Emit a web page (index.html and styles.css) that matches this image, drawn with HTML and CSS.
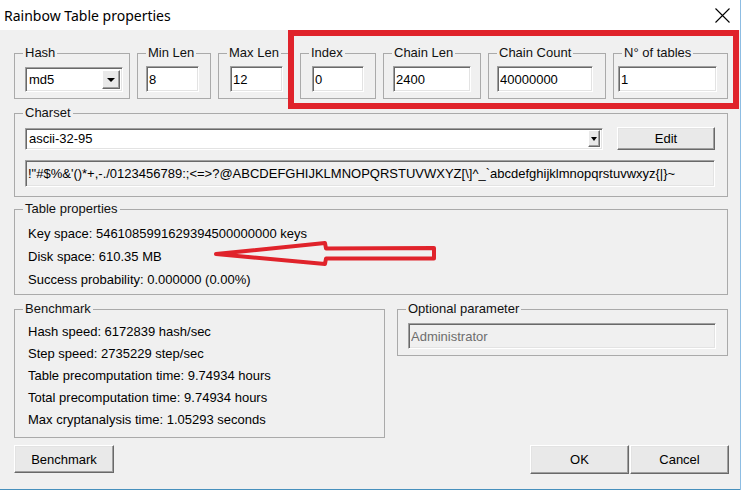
FILE: index.html
```html
<!DOCTYPE html>
<html lang="en">
<head>
    <meta charset="UTF-8">
    <title>Rainbow Table properties</title>
    <link rel="stylesheet" href="styles.css">
</head>
<body>

<div class="window">
    <div class="titlebar">
        <span class="title">Rainbow Table properties</span>
        <span class="close">
            <svg width="15" height="15" viewBox="0 0 15 15"><path d="M0.5 0.5 L14.5 14.5 M14.5 0.5 L0.5 14.5" stroke="#000" stroke-width="1.1" fill="none"/></svg>
        </span>
    </div>

    <div class="client">
        <!-- table parameters -->
        <div class="params">
            <fieldset class="grp g-hash">
                <legend>Hash</legend>
                <div class="body">
                    <div class="combo combo-hash">
                        <span class="combo-value">md5</span>
                        <span class="drop"><span class="tri"></span></span>
                    </div>
                </div>
            </fieldset>
            <fieldset class="grp g-min">
                <legend>Min Len</legend>
                <div class="body"><input type="text" class="field" value="8"></div>
            </fieldset>
            <fieldset class="grp g-max">
                <legend>Max Len</legend>
                <div class="body"><input type="text" class="field" value="12"></div>
            </fieldset>
            <fieldset class="grp g-index">
                <legend>Index</legend>
                <div class="body"><input type="text" class="field" value="0"></div>
            </fieldset>
            <fieldset class="grp g-clen">
                <legend>Chain Len</legend>
                <div class="body"><input type="text" class="field" value="2400"></div>
            </fieldset>
            <fieldset class="grp g-ccount">
                <legend>Chain Count</legend>
                <div class="body"><input type="text" class="field" value="40000000"></div>
            </fieldset>
            <fieldset class="grp g-ntables">
                <legend>N° of tables</legend>
                <div class="body"><input type="text" class="field" value="1"></div>
            </fieldset>
        </div>

        <!-- charset -->
        <fieldset class="grp g-charset">
            <legend>Charset</legend>
            <div class="body">
                <div class="charset-row">
                    <div class="combo combo-charset">
                        <span class="combo-value">ascii-32-95</span>
                        <span class="drop"><span class="tri"></span></span>
                    </div>
                    <button type="button" class="btn btn-edit">Edit</button>
                </div>
                <div class="charset-chars">!"#$%&amp;'()*+,-./0123456789:;&lt;=&gt;?@ABCDEFGHIJKLMNOPQRSTUVWXYZ[\]^_`abcdefghijklmnopqrstuvwxyz{|}~</div>
            </div>
        </fieldset>

        <!-- table properties -->
        <fieldset class="grp g-table">
            <legend>Table properties</legend>
            <div class="body lines">
                <div>Key space: 5461085991629394500000000 keys</div>
                <div>Disk space: 610.35 MB</div>
                <div>Success probability: 0.000000 (0.00%)</div>
            </div>
        </fieldset>

        <div class="bottom">
            <fieldset class="grp g-bench">
                <legend>Benchmark</legend>
                <div class="body lines bench-lines">
                    <div>Hash speed: 6172839 hash/sec</div>
                    <div>Step speed: 2735229 step/sec</div>
                    <div>Table precomputation time: 9.74934 hours</div>
                    <div>Total precomputation time: 9.74934 hours</div>
                    <div>Max cryptanalysis time: 1.05293 seconds</div>
                </div>
            </fieldset>
            <fieldset class="grp g-optional">
                <legend>Optional parameter</legend>
                <div class="body"><input type="text" class="field field-disabled" value="Administrator" disabled></div>
            </fieldset>

            <div class="buttons">
                <button type="button" class="btn btn-bench">Benchmark</button>
                <div class="dlg-buttons">
                    <button type="button" class="btn btn-dlg">OK</button>
                    <button type="button" class="btn btn-dlg">Cancel</button>
                </div>
            </div>
        </div>
    </div>

    <!-- red annotations -->
    <div class="mark-box"></div>
    <svg class="mark-arrow" width="745" height="491" viewBox="0 0 745 491">
        <path d="M216 254 L325 243 L326 248.5 L434 248 L434 258.5 L326 258.5 L325 264 Z" fill="none" stroke="#e0232b" stroke-width="4" stroke-linejoin="round"/>
    </svg>
</div>

</body>
</html>
```

FILE: styles.css
```css
body {
    margin: 0;
    background: #fff;
    font-family: "Liberation Sans", Arial, sans-serif;
    font-size: 13px;
    color: #000;
}
.window {
    position: relative;
    width: 740px;
    border-right: 1px solid #8dbde3;
}
.titlebar {
    height: 30px;
    background: #fff;
    display: flex;
    align-items: center;
    justify-content: space-between;
    padding: 0 10px 0 4px;
}
.title {
    font-family: "Noto Sans", sans-serif;
    font-size: 14px;
    margin-top: 1px;
}
.close {
    display: flex;
    margin-top: 1px;
}
.client {
    box-sizing: border-box;
    height: 460px;
    background: #f0f0f0;
    border-bottom: 1px solid #4790bd;
    padding: 15px 0 0 14px;
}

/* group boxes */
.grp {
    margin: 0;
    padding: 0;
    min-width: 0;
    box-sizing: border-box;
    border: 1px solid #aaaaaa;
}
.grp legend {
    margin-left: 8px;
    padding: 0 2px;
    line-height: 16px;
    font-size: 13px;
    font-weight: normal;
    color: #111;
}
.field {
    display: block;
    box-sizing: border-box;
    height: 26px;
    margin: 0;
    padding: 0 2px;
    font-family: "Liberation Sans", Arial, sans-serif;
    font-size: 13px;
    color: #000;
    background: #fff;
    border: 1px solid;
    border-color: #a0a0a0 #fff #fff #a0a0a0;
    box-shadow: inset 1px 1px #696969, inset -1px -1px #e3e3e3;
    outline: none;
}
.field-disabled {
    background: #f0f0f0;
    color: #6d6d6d;
    width: 308px;
}

.params {
    display: flex;
    gap: 7px;
}
.params .body {
    padding: 5px 0 6px;
}
.g-hash { width: 116px; }
.g-hash .body { padding-left: 10px; }
.g-min { width: 74px; }
.g-min .body { padding-left: 8px; }
.g-min .field { width: 53px; }
.g-max { width: 75px; }
.g-max .body { padding-left: 11px; }
.g-max .field { width: 53px; }
.g-index { width: 76px; }
.g-index .body { padding-left: 11px; }
.g-index .field { width: 52px; }
.g-clen { width: 98px; }
.g-clen .body { padding-left: 9px; }
.g-clen .field { width: 78px; }
.g-ccount { width: 118px; }
.g-ccount .body { padding-left: 8px; }
.g-ccount .field { width: 96px; }
.g-ntables { width: 115px; }
.g-ntables .body { padding-left: 4px; }
.g-ntables .field { width: 99px; }

/* combo boxes */
.combo {
    box-sizing: border-box;
    display: flex;
    align-items: center;
    justify-content: space-between;
    background: #fff;
    border: 1px solid;
    border-color: #a0a0a0 #fff #fff #a0a0a0;
    box-shadow: inset 1px 1px #696969, inset -1px -1px #e3e3e3;
    padding: 0 2px 0 3px;
}
.combo-hash {
    width: 98px;
    height: 25px;
    margin-top: 1px;
}
.combo-hash .drop {
    width: 18px;
    height: 19px;
}
.combo-charset {
    width: 578px;
    height: 22px;
}
.combo-charset .drop {
    width: 12px;
    height: 17px;
}
.drop {
    box-sizing: border-box;
    display: flex;
    align-items: center;
    justify-content: center;
    background: #e9e9e9;
    border: 1px solid;
    border-color: #fff #696969 #696969 #fff;
    box-shadow: inset -1px -1px #a0a0a0;
}
.tri {
    width: 0;
    height: 0;
    border-left: 4px solid transparent;
    border-right: 4px solid transparent;
    border-top: 4px solid #000;
}
.combo-charset .tri {
    border-left-width: 3px;
    border-right-width: 3px;
}

/* buttons */
.btn {
    box-sizing: border-box;
    margin: 0;
    padding: 0;
    font-family: "Liberation Sans", Arial, sans-serif;
    font-size: 13px;
    color: #000;
    background: #e9e9e9;
    border: 1px solid;
    border-color: #fff #696969 #696969 #fff;
    box-shadow: inset -1px -1px #a0a0a0, inset 1px 1px #e3e3e3;
}

/* charset */
.g-charset {
    width: 714px;
    margin-top: 6px;
}
.g-charset .body {
    padding: 6px 0 9px 10px;
}
.charset-row {
    display: flex;
    align-items: center;
    height: 23px;
}
.btn-edit {
    width: 98px;
    height: 23px;
    margin-left: 14px;
}
.charset-chars {
    box-sizing: border-box;
    width: 690px;
    height: 27px;
    margin-top: 10px;
    padding: 0 2px;
    line-height: 25px;
    white-space: nowrap;
    overflow: hidden;
    background: #f0f0f0;
    border: 1px solid;
    border-color: #a0a0a0 #fff #fff #a0a0a0;
    box-shadow: inset 1px 1px #696969, inset -1px -1px #e3e3e3;
}

/* table properties */
.g-table {
    width: 714px;
    margin-top: 4px;
}
.lines {
    padding-left: 13px;
    line-height: 23px;
}
.g-table .lines {
    padding-top: 5px;
    padding-bottom: 3px;
}

/* bottom */
.bottom {
    display: grid;
    grid-template-columns: 371px 331px;
    column-gap: 12px;
    align-items: start;
    margin-top: 6px;
}
.bench-lines {
    line-height: 22px;
    padding-top: 4px;
    padding-bottom: 6px;
}
.g-optional .body {
    padding: 6px 0 6px 10px;
}
.buttons {
    grid-column: 1 / -1;
    display: flex;
    justify-content: space-between;
    width: 715px;
    margin-top: 7px;
}
.btn-bench {
    width: 100px;
    height: 28px;
}
.dlg-buttons {
    display: flex;
    gap: 1px;
}
.btn-dlg {
    width: 99px;
    height: 29px;
}

/* annotations drawn over the dialog */
.mark-box {
    position: absolute;
    left: 288px;
    top: 30px;
    width: 451px;
    height: 79px;
    box-sizing: border-box;
    border: 6px solid #e0232b;
}
.mark-arrow {
    position: absolute;
    left: 0;
    top: 0;
    pointer-events: none;
}
```
